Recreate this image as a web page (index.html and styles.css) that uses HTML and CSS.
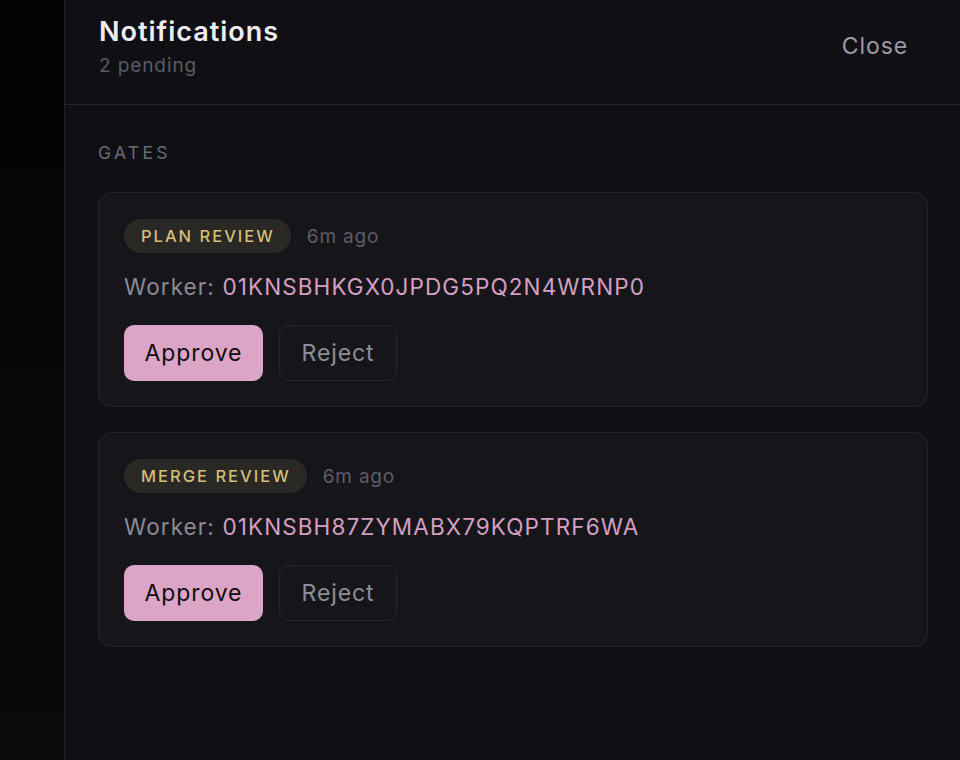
FILE: index.html
```html
<!DOCTYPE html>
<html lang="en">
<head>
<meta charset="utf-8">
<title>Notifications</title>
<link rel="stylesheet" href="styles.css">
</head>
<body>
<div class="app">
  <div class="backdrop"></div>
  <aside class="panel">
    <header class="panel-header">
      <div class="titles">
        <h1 class="title">Notifications</h1>
        <div class="subtitle">2 pending</div>
      </div>
      <button class="close-btn">Close</button>
    </header>
    <section class="panel-body">
      <div class="section-label">GATES</div>
      <div class="card">
        <div class="card-meta">
          <span class="badge">PLAN REVIEW</span>
          <span class="time">6m ago</span>
        </div>
        <div class="worker"><span class="worker-label">Worker:</span> <span class="worker-id">01KNSBHKGX0JPDG5PQ2N4WRNP0</span></div>
        <div class="actions">
          <button class="btn btn-approve">Approve</button>
          <button class="btn btn-reject">Reject</button>
        </div>
      </div>
      <div class="card">
        <div class="card-meta">
          <span class="badge">MERGE REVIEW</span>
          <span class="time">6m ago</span>
        </div>
        <div class="worker"><span class="worker-label">Worker:</span> <span class="worker-id">01KNSBH87ZYMABX79KQPTRF6WA</span></div>
        <div class="actions">
          <button class="btn btn-approve">Approve</button>
          <button class="btn btn-reject">Reject</button>
        </div>
      </div>
    </section>
  </aside>
</div>
</body>
</html>
```
FILE: styles.css
```css
* { box-sizing: border-box; }
html, body {
  margin: 0;
  padding: 0;
  height: 100%;
  background: #050506;
  font-family: Inter, "Noto Sans", sans-serif;
}
.app {
  display: flex;
  height: 760px;
  width: 960px;
  overflow: hidden;
}
.backdrop {
  width: 64px;
  flex: none;
  background: linear-gradient(#030303, #0a0a0b);
}
.panel {
  flex: 1;
  background: #101014;
  border-left: 1px solid #1f1f27;
  display: flex;
  flex-direction: column;
}
.panel-header {
  display: flex;
  justify-content: space-between;
  align-items: flex-start;
  padding: 15px 52px 0 34px;
  height: 105px;
  border-bottom: 1px solid #23232b;
}
.title {
  margin: 0;
  font-size: 27px;
  font-weight: 600;
  color: #ededf0;
  line-height: 34px;
  letter-spacing: 1px;
}
.subtitle {
  margin-top: 4px;
  font-size: 19px;
  color: #5b5b64;
  line-height: 26px;
  letter-spacing: 0.9px;
}
.close-btn {
  margin-top: 17px;
  background: none;
  border: none;
  padding: 0;
  font-family: inherit;
  font-size: 23px;
  color: #9b9ba5;
  letter-spacing: 0.9px;
}
.panel-body {
  padding: 36px 32px 0 33px;
  display: flex;
  flex-direction: column;
  gap: 25px;
}
.section-label {
  font-size: 17.5px;
  letter-spacing: 3.3px;
  color: #6a6a73;
  line-height: 24px;
  margin-bottom: 2px;
}
.card {
  background: #16161a;
  border: 1px solid #24242b;
  border-radius: 14px;
  padding: 26px 25px 25px 25px;
  display: flex;
  flex-direction: column;
}
.card-meta {
  display: flex;
  align-items: center;
  gap: 16px;
}
.badge {
  background: #2a2824;
  color: #d5be78;
  font-size: 16.5px;
  letter-spacing: 2px;
  font-weight: 500;
  border-radius: 17px;
  padding: 0 16px 0 17px;
  height: 34px;
  line-height: 34px;
}
.time {
  font-size: 19px;
  color: #5d5d66;
  letter-spacing: 0.8px;
}
.worker {
  margin-top: 19px;
  font-size: 22.5px;
  line-height: 30px;
  letter-spacing: 1.1px;
}
.worker-label { color: #8a8a94; }
.worker-id { color: #d59fc2; }
.actions {
  margin-top: 23px;
  display: flex;
  gap: 16px;
}
.btn {
  height: 56px;
  border-radius: 10px;
  font-family: inherit;
  font-size: 23px;
  padding: 0;
  letter-spacing: 0.9px;
}
.btn-approve {
  background: #dba5c6;
  border: none;
  color: #0d0d10;
  width: 139px;
}
.btn-reject {
  background: transparent;
  border: 1px solid #25252c;
  color: #8d8d97;
  width: 118px;
}
```
